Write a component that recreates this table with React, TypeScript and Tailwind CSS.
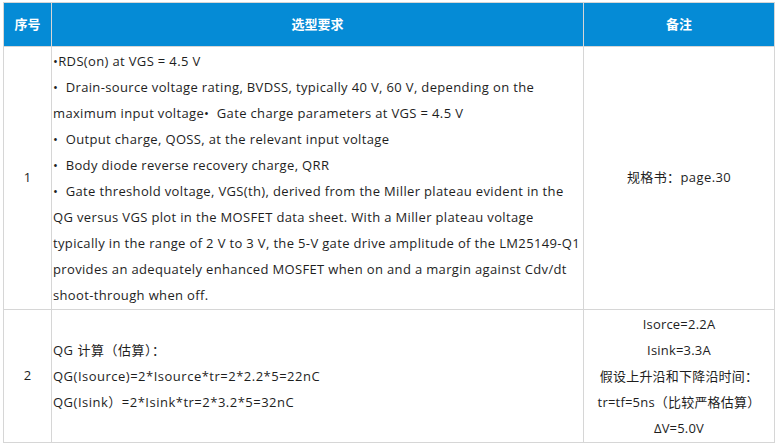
import React from "react";

const font = { fontFamily: '"Open Sans", "Noto Sans CJK SC", sans-serif' };

const row1Lines = [
  "•RDS(on) at VGS = 4.5 V",
  "•  Drain-source voltage rating, BVDSS, typically 40 V, 60 V, depending on the",
  "maximum input voltage•  Gate charge parameters at VGS = 4.5 V",
  "•  Output charge, QOSS, at the relevant input voltage",
  "•  Body diode reverse recovery charge, QRR",
  "•  Gate threshold voltage, VGS(th), derived from the Miller plateau evident in the",
  "QG versus VGS plot in the MOSFET data sheet. With a Miller plateau voltage",
  "typically in the range of 2 V to 3 V, the 5-V gate drive amplitude of the LM25149-Q1",
  "provides an adequately enhanced MOSFET when on and a margin against Cdv/dt",
  "shoot-through when off.",
];

const row2Lines = [
  "QG 计算（估算）：",
  "QG(Isource)=2*Isource*tr=2*2.2*5=22nC",
  "QG(Isink）=2*Isink*tr=2*3.2*5=32nC",
];

const row2Notes = [
  "Isorce=2.2A",
  "Isink=3.3A",
  "假设上升沿和下降沿时间：",
  "tr=tf=5ns（比较严格估算）",
  "ΔV=5.0V",
];

export default function App() {
  return (
    <div className="w-[780px] h-[447px] bg-white pt-[2px] pl-[3px]" style={font}>
      <div className="grid w-[772px] grid-cols-[47px_531px_190px] grid-rows-[43px_262px_132px] gap-px bg-[#d6d6d6] p-px text-[13px] text-[#1e1e1e]">
        <div className="flex items-center justify-center bg-[#058bd6] font-bold text-white">序号</div>
        <div className="flex items-center justify-center bg-[#058bd6] font-bold text-white">选型要求</div>
        <div className="flex items-center justify-center bg-[#058bd6] font-bold text-white">备注</div>

        <div className="flex items-center justify-center bg-white">1</div>
        <div className="flex flex-col justify-center bg-white pl-px leading-[26px] tracking-[0.35px]">
          {row1Lines.map((l, i) => (
            <div key={i} className="whitespace-pre">{l}</div>
          ))}
        </div>
        <div className="flex items-center justify-center bg-white tracking-[0.4px]">规格书：page.30</div>

        <div className="flex items-center justify-center bg-white">2</div>
        <div className="flex flex-col justify-center bg-white pl-px leading-[26px] tracking-[0.5px]">
          {row2Lines.map((l, i) => (
            <div key={i} className="whitespace-pre">{l}</div>
          ))}
        </div>
        <div className="flex flex-col items-center justify-center bg-white leading-[26px] tracking-[0.2px]">
          {row2Notes.map((l, i) => (
            <div key={i} className="whitespace-pre">{l}</div>
          ))}
        </div>
      </div>
    </div>
  );
}
